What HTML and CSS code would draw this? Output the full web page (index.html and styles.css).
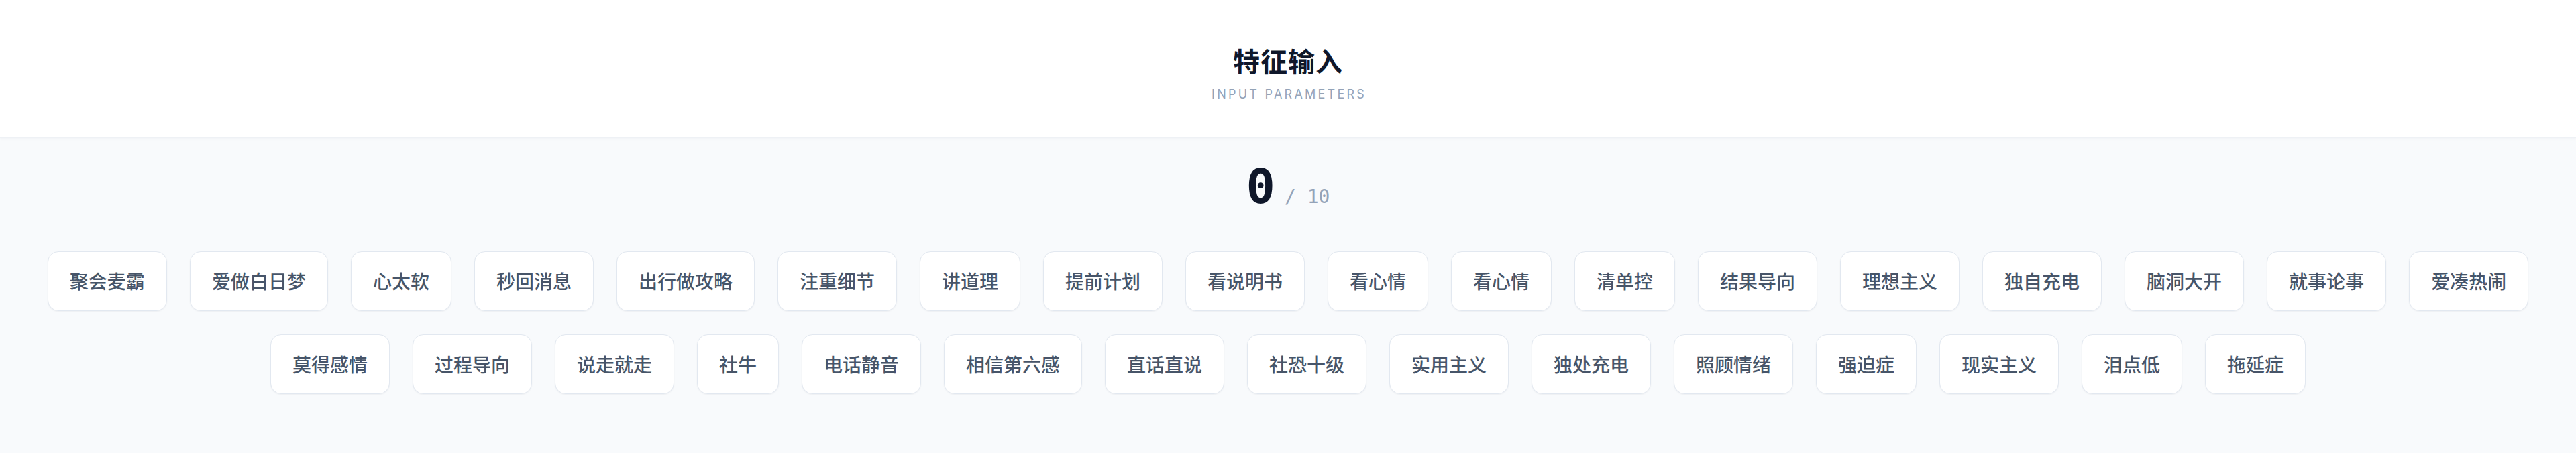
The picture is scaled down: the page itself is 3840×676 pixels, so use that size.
FILE: index.html
```html
<!DOCTYPE html>
<html lang="zh">
<head>
<meta charset="utf-8">
<title>特征输入</title>
<link rel="stylesheet" href="styles.css">
</head>
<body>
<header class="header">
  <h1 class="title">特征输入</h1>
  <p class="subtitle">INPUT PARAMETERS</p>
</header>
<main class="main">
  <div class="counter">
    <span class="count">0</span>
    <span class="total">/ 10</span>
  </div>
  <div class="tags">
    <button class="tag">聚会麦霸</button>
    <button class="tag">爱做白日梦</button>
    <button class="tag">心太软</button>
    <button class="tag">秒回消息</button>
    <button class="tag">出行做攻略</button>
    <button class="tag">注重细节</button>
    <button class="tag">讲道理</button>
    <button class="tag">提前计划</button>
    <button class="tag">看说明书</button>
    <button class="tag">看心情</button>
    <button class="tag">看心情</button>
    <button class="tag">清单控</button>
    <button class="tag">结果导向</button>
    <button class="tag">理想主义</button>
    <button class="tag">独自充电</button>
    <button class="tag">脑洞大开</button>
    <button class="tag">就事论事</button>
    <button class="tag">爱凑热闹</button>
    <button class="tag">莫得感情</button>
    <button class="tag">过程导向</button>
    <button class="tag">说走就走</button>
    <button class="tag">社牛</button>
    <button class="tag">电话静音</button>
    <button class="tag">相信第六感</button>
    <button class="tag">直话直说</button>
    <button class="tag">社恐十级</button>
    <button class="tag">实用主义</button>
    <button class="tag">独处充电</button>
    <button class="tag">照顾情绪</button>
    <button class="tag">强迫症</button>
    <button class="tag">现实主义</button>
    <button class="tag">泪点低</button>
    <button class="tag">拖延症</button>
  </div>
</main>
</body>
</html>
```
FILE: styles.css
```css
* { box-sizing: border-box; }
html, body {
  margin: 0;
  padding: 0;
}
body {
  background: #f8fafc;
  font-family: Inter, "Noto Sans CJK SC", sans-serif;
  min-height: 676px;
}
.header {
  background: #ffffff;
  border-bottom: 1px solid #eef1f5;
  box-shadow: 0 1px 4px rgba(15, 23, 42, 0.04);
  padding: 62px 0 0;
  height: 206px;
  text-align: center;
}
.title {
  margin: 0;
  font-family: "Noto Sans CJK SC", sans-serif;
  font-size: 40px;
  font-weight: 700;
  line-height: 56px;
  color: #0f172a;
  letter-spacing: 1px;
}
.subtitle {
  margin: 11px 0 0;
  font-family: Inter, sans-serif;
  font-size: 18px;
  line-height: 24px;
  letter-spacing: 0.18em;
  color: #94a3b8;
  padding-left: 0.18em;
}
.main {
  padding: 36px 40px 40px;
}
.counter {
  display: flex;
  justify-content: center;
  align-items: baseline;
  gap: 14px;
  font-family: "DejaVu Sans Mono", monospace;
}
.count {
  font-size: 72px;
  line-height: 1;
  font-weight: 700;
  color: #0f172a;
}
.total {
  font-size: 28px;
  line-height: 1;
  color: #94a3b8;
}
.tags {
  margin-top: 61px;
  display: flex;
  flex-wrap: wrap;
  justify-content: center;
  gap: 35px 34px;
}
.tag {
  font-family: "Noto Sans CJK SC", sans-serif;
  font-size: 28px;
  font-weight: 500;
  line-height: 41px;
  padding: 23px 32px;
  color: #475569;
  background: #ffffff;
  border: 1px solid #e2e8f0;
  border-radius: 16px;
  box-shadow: 0 1px 2px rgba(15, 23, 42, 0.05);
  cursor: pointer;
}
```
